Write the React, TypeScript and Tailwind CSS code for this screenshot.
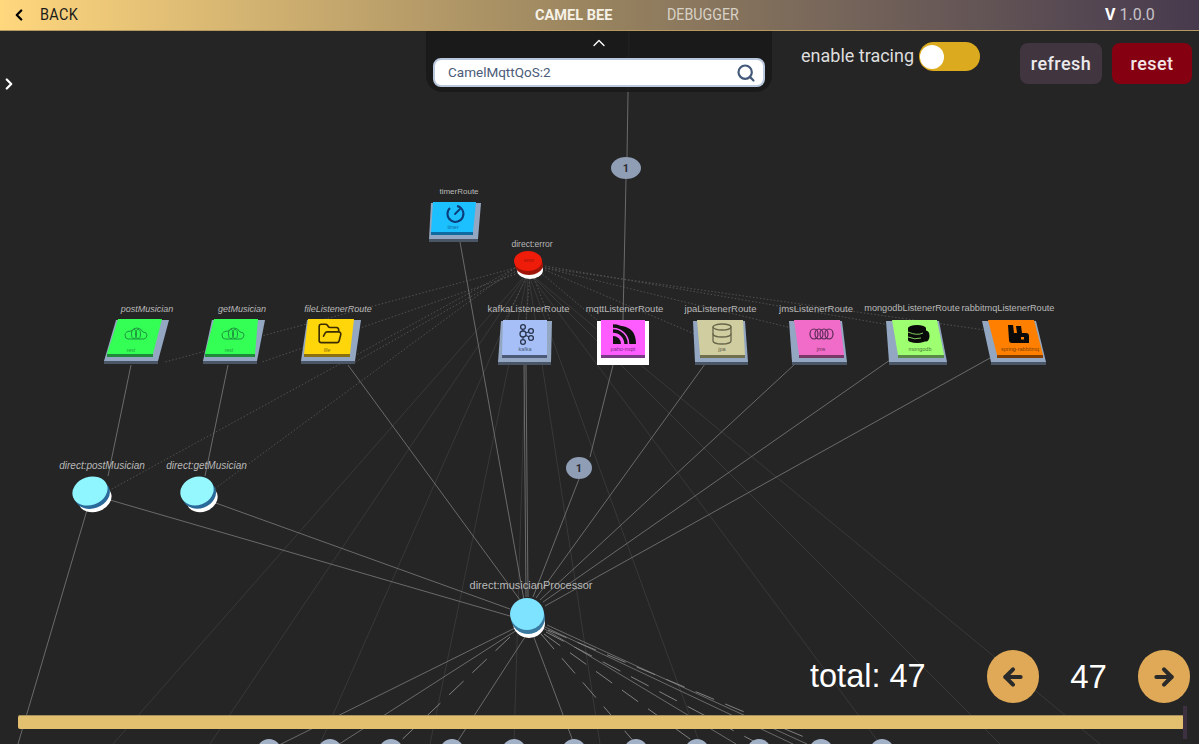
import { ArrowLeft, ArrowRight, ChevronLeft, ChevronRight, ChevronUp, Database, FolderOpen, Search } from "lucide-react";

// bottom row of route nodes, cut off by the page edge
const bottomNodes = [269, 330, 391, 452, 514, 574, 636, 697, 759, 821, 882];

const tiles = [
  { name: "postMusician", top: [118, 162, 107, 153], base: [116, 169, 104, 158], y: 319, fill: "#33ff55", lip: "#1f8a3a" },
  { name: "getMusician", top: [214, 258, 205, 255], base: [212, 265, 203, 257], y: 319, fill: "#33ff55", lip: "#1f8a3a" },
  { name: "file", top: [308, 354, 304, 350], base: [307, 361, 301, 355], y: 319, fill: "#ffd60a", lip: "#8a7010" },
  { name: "kafka", top: [503, 547, 502, 547], base: [501, 552, 498, 551], y: 320, fill: "#a6c0f7", lip: "#4a5a78" },
  { name: "mqtt", top: [601, 645, 601, 645], base: [597, 649, 597, 649], y: 320, fill: "#ff5cff", lip: "#7a3a85", baseFill: "#ffffff", baseLow: "#ffffff" },
  { name: "timer", top: [433, 476, 431, 473], base: [431, 481, 429, 478], y: 202, h: 30, fill: "#1cc0ff", lip: "#0e6aa0" },
  { name: "jpa", top: [697, 743, 700, 745], base: [693, 745, 695, 748], y: 320, fill: "#d0cda0", lip: "#70704f" },
  { name: "jms", top: [794, 840, 799, 844], base: [789, 842, 792, 847], y: 320, fill: "#f06cc8", lip: "#7a3868" },
  { name: "mongo", top: [892, 937, 898, 944], base: [886, 939, 889, 947], y: 320, fill: "#9eff70", lip: "#5a8a4a" },
  { name: "rabbit", top: [988, 1034, 997, 1043], base: [982, 1036, 991, 1046], y: 320, fill: "#ff7f00", lip: "#803f00" },
];

const labels = [
  { text: "timerRoute", x: 459, y: 192, size: 8, skew: "" },
  { text: "direct:error", x: 532, y: 244, size: 8.5, skew: "" },
  { text: "postMusician", x: 147, y: 309, size: 9, skew: "italic" },
  { text: "getMusician", x: 242, y: 309, size: 9, skew: "italic" },
  { text: "fileListenerRoute", x: 338, y: 309, size: 9, skew: "italic" },
  { text: "kafkaListenerRoute", x: 528.5, y: 309, size: 9.5, skew: "" },
  { text: "mqttListenerRoute", x: 624.5, y: 309, size: 9.5, skew: "" },
  { text: "jpaListenerRoute", x: 720.5, y: 309, size: 9.5, skew: "" },
  { text: "jmsListenerRoute", x: 816, y: 309, size: 9.5, skew: "" },
  { text: "mongodbListenerRoute", x: 912, y: 309, size: 9.2, skew: "" },
  { text: "rabbitmqListenerRoute", x: 1008, y: 309, size: 9.2, skew: "" },
  { text: "direct:postMusician", x: 102, y: 466, size: 10, skew: "italic" },
  { text: "direct:getMusician", x: 206.5, y: 466, size: 10, skew: "italic" },
  { text: "direct:musicianProcessor", x: 531, y: 585, size: 11, skew: "" },
  // captions on the tiles
  { text: "rest", x: 131, y: 350, size: 5, skew: "italic", color: "#1f9a3a" },
  { text: "rest", x: 229, y: 350, size: 5, skew: "italic", color: "#1f9a3a" },
  { text: "file", x: 327, y: 350, size: 5, skew: "italic", color: "#7a6410" },
  { text: "kafka", x: 525, y: 350, size: 5.5, skew: "", color: "#4a5a78" },
  { text: "paho-mqtt", x: 623, y: 350, size: 5.5, skew: "", color: "#7a2a85" },
  { text: "timer", x: 453, y: 227, size: 5, skew: "", color: "#0e6aa0" },
  { text: "error", x: 529, y: 260, size: 5, skew: "", color: "#a0150a" },
  { text: "jpa", x: 722, y: 350, size: 5.5, skew: "", color: "#60604a" },
  { text: "jms", x: 821, y: 350, size: 5.5, skew: "", color: "#6a2a58" },
  { text: "mongodb", x: 920, y: 350, size: 5.5, skew: "", color: "#4a7a3a" },
  { text: "spring-rabbitmq", x: 1020, y: 350, size: 5.5, skew: "", color: "#803f00" },
];

const solid = [
  [629, 31, 627, 157], [626, 179, 623, 320], [460, 242, 524, 600],
  [131, 365, 108, 476], [228, 365, 205, 476], [87, 510, 18, 744],
  [110, 500, 510, 616], [213, 502, 510, 609], [348, 365, 520, 600],
  [524, 364, 526, 597], [526, 364, 528, 597], [613, 365, 590, 457], [579, 479, 533, 597],
  [705, 364, 536, 598], [795, 364, 540, 600], [890, 360, 543, 602], [990, 358, 545, 606],
  // out of direct:musicianProcessor
  [515, 628, 269, 750], [517, 630, 330, 750], [525, 637, 452, 750], [533, 635, 574, 744],
  [547, 625, 807, 744], [545, 627, 793, 744], [543, 628, 736, 744],
];

const processorDashed = [
  [510, 637, 391, 750], [541, 634, 636, 744], [544, 634, 697, 744], [546, 632, 759, 744], [548, 630, 821, 744],
];

const errorFan = [
  [515, 268, 110, 490], [515, 268, 213, 490], [518, 270, 350, 365], [522, 272, 262, 362], [515, 268, 165, 362],
  [528, 275, 505, 320], [530, 275, 526, 320], [533, 275, 550, 320], [540, 272, 597, 320], [545, 270, 697, 335],
  [545, 268, 800, 330], [545, 266, 890, 325], [545, 268, 985, 330],
];

const errorFaint = [113, 210, 320, 430, 514, 600, 700, 880, 1000, 1100];

function Label({ text, x, y, size, skew, color }: { text: string; x: number; y: number; size: number; skew: string; color?: string }) {
  return (
    <span
      className={`absolute -translate-x-1/2 -translate-y-1/2 whitespace-nowrap font-['Liberation_Sans',sans-serif] leading-none ${skew}`}
      style={{ left: x, top: y, fontSize: size, color: color ?? "#b9b9b9" }}
    >
      {text}
    </span>
  );
}

function Tile({ t }: { t: (typeof tiles)[number] }) {
  const h = t.h ?? 35;
  const [tl, tr, bl, br] = t.top;
  const [btl, btr, bbl, bbr] = t.base;
  const y = t.y;
  return (
    <g>
      <polygon points={`${bbl},${y + h + 6} ${bbr},${y + h + 6} ${bbr},${y + h + 10} ${bbl},${y + h + 10}`} fill={t.baseLow ?? "#4a5565"} />
      <polygon points={`${btl},${y + 1} ${btr},${y + 1} ${bbr},${y + h + 7} ${bbl},${y + h + 7}`} fill={t.baseFill ?? "#93a7c2"} />
      <polygon points={`${bl},${y + h} ${br},${y + h} ${br},${y + h + 3} ${bl},${y + h + 3}`} fill={t.lip} />
      <polygon points={`${tl},${y} ${tr},${y} ${br},${y + h} ${bl},${y + h}`} fill={t.fill} />
    </g>
  );
}

function Disc({ cx, cy, rx, ry, fill, lip, rotate }: { cx: number; cy: number; rx: number; ry: number; fill: string; lip: string; rotate: number }) {
  return (
    <g transform={`rotate(${rotate} ${cx} ${cy})`}>
      <ellipse cx={cx + 2} cy={cy + 9} rx={rx - 1} ry={ry - 1} fill="#ffffff" />
      <ellipse cx={cx + 1} cy={cy + 4} rx={rx} ry={ry} fill={lip} />
      <ellipse cx={cx} cy={cy} rx={rx} ry={ry} fill={fill} />
    </g>
  );
}

function RestCloud({ cx }: { cx: number }) {
  return (
    <g stroke="#1f9440" strokeWidth={1}>
      <path d={`M${cx - 8} 339 H${cx + 8} Q${cx + 11} 338 ${cx + 11} 335 Q${cx + 11} 332 ${cx + 7} 332 Q${cx + 5} 328 ${cx + 1} 328 Q${cx - 3} 328 ${cx - 4} 331 Q${cx - 11} 331 ${cx - 11} 335 Q${cx - 11} 339 ${cx - 8} 339 Z`} />
      <ellipse cx={cx - 2} cy={334} rx={2.5} ry={4.5} />
      <ellipse cx={cx + 2} cy={334} rx={2.5} ry={4.5} />
    </g>
  );
}

function Graph() {
  return (
    <svg className="absolute inset-0" width={1199} height={744} viewBox="0 0 1199 744" fill="none">
      {/* faint edges leaving direct:error for the nodes below the fold */}
      {errorFaint.map((x) => (
        <line key={x} x1={528} y1={272} x2={x} y2={744} stroke="#3e3e3e" strokeWidth={0.8} />
      ))}
      {errorFan.map((l, i) => (
        <line key={i} x1={l[0]} y1={l[1]} x2={l[2]} y2={l[3]} stroke="#565656" strokeWidth={0.9} strokeDasharray="1.5 2" />
      ))}
      {solid.map((l, i) => (
        <line key={i} x1={l[0]} y1={l[1]} x2={l[2]} y2={l[3]} stroke="#7c7c7c" strokeWidth={0.8} />
      ))}
      {processorDashed.map((l, i) => (
        <line key={i} x1={l[0]} y1={l[1]} x2={l[2]} y2={l[3]} stroke="#8a8a8a" strokeWidth={0.9} strokeDasharray="20 12" />
      ))}

      {tiles.map((t) => (
        <Tile key={t.name} t={t} />
      ))}

      {/* icons on the tiles */}
      <RestCloud cx={136} />
      <RestCloud cx={233} />
      <FolderOpen x={317} y={321} size={26} color="#3a2c00" strokeWidth={1.5} />

      <path d="M450 208 A8 8 0 1 0 457 206" stroke="#0a3d7a" strokeWidth={2} />
      <path d="M455 214 L460 209" stroke="#0a3d7a" strokeWidth={1.8} strokeLinecap="round" />

      <g stroke="#2a3550" strokeWidth={1.3}>
        <path d="M523 334 L531 331 M523 334 L531 338 M523 327 V342" />
        <circle cx={523} cy={327} r={2.4} fill="#a6c0f7" />
        <circle cx={523} cy={334} r={3} fill="#a6c0f7" />
        <circle cx={523} cy={342} r={2.4} fill="#a6c0f7" />
        <circle cx={531} cy={331} r={2.4} fill="#a6c0f7" />
        <circle cx={531} cy={338} r={2.4} fill="#a6c0f7" />
      </g>

      <path d="M613 344 V336 A8 8 0 0 1 621 344 Z" fill="#111111" />
      <path d="M613 331 A13 13 0 0 1 626 344 M613 326 A18 18 0 0 1 631 344" stroke="#111111" strokeWidth={3.4} />
      <path d="M613 326 H622 Q636 328 636 344 H632 A19 19 0 0 0 613 325 Z" fill="#111111" />

      <Database x={710} y={322} size={24} color="#67664a" strokeWidth={1.3} />

      <g stroke="#5a2a55" strokeWidth={1.2}>
        <ellipse cx={814} cy={334} rx={4} ry={5} />
        <ellipse cx={819} cy={334} rx={4} ry={5} />
        <ellipse cx={824} cy={334} rx={4} ry={5} />
        <ellipse cx={829} cy={334} rx={4} ry={5} />
      </g>

      <g fill="#0a0a0a">
        <ellipse cx={917} cy={328} rx={9} ry={3} />
        <rect x={908} y={328} width={18} height={12} />
        <ellipse cx={917} cy={340} rx={9} ry={3} />
        <ellipse cx={926} cy={336} rx={3.5} ry={5.5} />
      </g>
      <path d="M908 332 Q917 336 923 333 M908 337 Q915 340 921 338" stroke="#9eff70" strokeWidth={0.8} />

      <path d="M1008 325 H1013 L1014 333 H1017 L1016 326 H1021 L1022 333 H1026 Q1029 333 1029 336 V343 H1012 Q1009 343 1009 340 Z" fill="#0a0a0a" />
      <rect x={1021} y={337} width={3} height={2.5} fill="#ff7f00" />

      {/* route discs */}
      <Disc cx={528} cy={261} rx={14} ry={10} fill="#ef1c0a" lip="#a0150a" rotate={0} />
      <Disc cx={90} cy={491} rx={18} ry={14} fill="#8ff5ff" lip="#2a6a9a" rotate={-20} />
      <Disc cx={197} cy={491} rx={17} ry={14} fill="#96f8ff" lip="#2a6a9a" rotate={-20} />
      <Disc cx={527} cy={614} rx={17} ry={16} fill="#7de3ff" lip="#3a7aa0" rotate={0} />

      {/* edge count badges */}
      <ellipse cx={626} cy={168} rx={15} ry={11} fill="#8f9db5" />
      <ellipse cx={579} cy={468} rx={13} ry={11} fill="#8f9db5" />
      {bottomNodes.map((x) => (
        <ellipse key={x} cx={x} cy={751} rx={12} ry={12} fill="#a3b1c7" />
      ))}
    </svg>
  );
}

export default function App() {
  return (
    <div className="relative h-[744px] w-[1199px] overflow-hidden bg-[#252525] font-[Roboto,sans-serif]">
      <Graph />
      {labels.map((l, i) => (
        <Label key={i} {...l} />
      ))}
      <span className="absolute left-[626px] top-[168px] -translate-x-1/2 -translate-y-1/2 text-[11px] font-bold leading-none text-[#2b2b33]">1</span>
      <span className="absolute left-[579px] top-[468px] -translate-x-1/2 -translate-y-1/2 text-[11px] font-bold leading-none text-[#2b2b33]">1</span>

      {/* header */}
      <header className="absolute inset-x-0 top-0 flex h-[31px] items-center border-b border-[#b5995f] bg-gradient-to-r from-[#ffd77d] via-[#98835f] to-[#473a4d]">
        <ChevronLeft className="ml-[10px] h-[18px] w-[18px] text-black" strokeWidth={3} />
        <span className="ml-[12px] w-[48px] origin-left scale-x-[0.85] text-[17px] tracking-wide text-[#1c1c1c]">BACK</span>
        <span className="ml-[447px] w-[78px] origin-left whitespace-nowrap text-[15px] font-bold text-[#f5f1e6] [transform:scaleX(0.97)]">CAMEL BEE</span>
        <span className="ml-[54px] w-[74px] origin-left whitespace-nowrap text-[16px] text-[#d8d2c6] [transform:scaleX(0.89)]">DEBUGGER</span>
        <span className="ml-[364px] whitespace-nowrap text-[16px] text-[#c7c2c8]">
          <b className="text-white">V</b> 1.0.0
        </span>
      </header>
      <ChevronRight className="absolute left-0 top-[75px] h-[18px] w-[18px] text-white" strokeWidth={3} />

      {/* search and tracing controls */}
      <div className="absolute inset-x-0 top-[31px] flex items-start pl-[426px]">
        <div className="flex h-[61px] w-[346px] flex-col items-center rounded-b-2xl bg-[#1a1a1a]/90 px-[7px]">
          <ChevronUp className="mt-[2px] h-[20px] w-[20px] text-white" strokeWidth={1.6} />
          <div className="mt-[5px] flex h-[29px] w-full items-center justify-between rounded-lg border-2 border-[#b9c8dc] bg-white pl-[13px] pr-[7px]">
            <span className="text-[13.5px] text-[#4b5b78]">CamelMqttQoS:2</span>
            <Search className="h-[20px] w-[20px] text-[#44597a]" strokeWidth={2.6} />
          </div>
        </div>
        <span className="ml-[29px] mt-[14px] text-[18px] leading-[22px] text-[#dedede]">enable tracing</span>
        <div className="ml-[5px] mt-[11px] flex h-[29px] w-[61px] items-center rounded-full bg-[#dbaa1f] pl-[1px]">
          <div className="h-[24px] w-[24px] rounded-full bg-white" />
        </div>
        <button className="ml-[40px] mt-[12px] h-[41px] w-[82px] rounded-lg bg-[#41363f] text-[18px] font-medium tracking-wide text-[#ece9ec]">refresh</button>
        <button className="ml-[10px] mt-[12px] h-[41px] w-[80px] rounded-lg bg-[#850011] text-[18px] font-medium tracking-wide text-[#f3e6e6]">reset</button>
      </div>

      {/* timeline */}
      <div className="absolute inset-x-0 bottom-0 flex h-[94px] flex-col font-['Liberation_Sans',sans-serif] text-white">
        <div className="flex h-[53px] items-center">
          <span className="ml-[810px] w-[177px] text-[32.5px] leading-none">total: 47</span>
          <button className="flex h-[53px] w-[52px] items-center justify-center rounded-full bg-[#dfa957]">
            <ArrowLeft className="h-[26px] w-[26px] text-[#2a2a2a]" strokeWidth={3.8} />
          </button>
          <span className="w-[99px] text-center text-[33px] leading-none">47</span>
          <button className="flex h-[53px] w-[52px] items-center justify-center rounded-full bg-[#dfa957]">
            <ArrowRight className="h-[26px] w-[26px] text-[#2a2a2a]" strokeWidth={3.8} />
          </button>
        </div>
        <div className="relative ml-[18px] mt-[12px] h-[14px] w-[1166px] rounded-[2px] border-t border-[#a8915f] bg-[#e3bf70]">
          <div className="absolute right-[-3px] top-[-10px] h-[33px] w-[4px] bg-[#3d3040]" />
        </div>
      </div>
    </div>
  );
}
